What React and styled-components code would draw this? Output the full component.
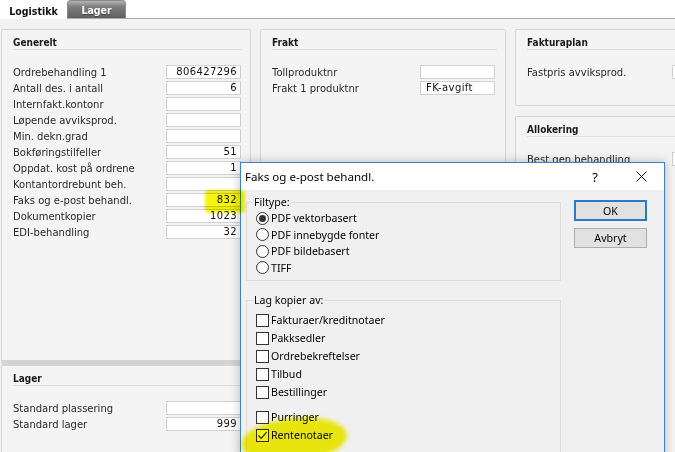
import React from "react";
import styled, { createGlobalStyle } from "styled-components";

const GlobalStyle = createGlobalStyle`
  html, body { margin: 0; padding: 0; }
  body {
    width: 675px; height: 452px; overflow: hidden; background: #fff;
    font-family: "DejaVu Sans", Verdana, sans-serif;
  }
  * { box-sizing: border-box; }
`;

const Page = styled.div`
  position: relative;
  width: 675px;
  height: 452px;
  overflow: hidden;
  display: flex;
  flex-direction: column;
`;

const TabBar = styled.div`
  display: flex;
  align-items: flex-end;
  height: 21px;
  border-bottom: 1px solid #ababab;
  background: #fff;
`;

const Tab = styled.div`
  display: flex;
  align-items: center;
  justify-content: center;
  font-family: "DejaVu Sans Condensed", "DejaVu Sans", sans-serif;
  font-weight: bold;
  font-size: 10.5px;
  height: ${(p) => (p.$active ? "17px" : "18px")};
  padding: 0 ${(p) => (p.$active ? "10px" : "0")};
  width: ${(p) => (p.$active ? "67px" : "59px")};
  margin-bottom: ${(p) => (p.$active ? "-1px" : "0")};
  background: ${(p) =>
    p.$active ? "#fff" : "linear-gradient(#b4b4b4, #7c7c7c 35%, #606060)"};
  color: ${(p) => (p.$active ? "#111" : "#fff")};
  text-shadow: ${(p) => (p.$active ? "none" : "0 1px 0 #444")};
  border-radius: 4px 4px 0 0;
  ${(p) => (p.$active ? "" : "border: 1px solid #8a8a8a; border-bottom: none;")}
`;

const Content = styled.div`
  flex: 1;
  background: #f2f2f2;
  padding: 10px 0 0 1px;
  display: grid;
  grid-template-columns: 250px 246px 230px;
  column-gap: 9px;
  align-items: start;
`;

const Column = styled.div`
  display: flex;
  flex-direction: column;
  gap: ${(p) => p.$gap || 0}px;
`;

const Panel = styled.div`
  background: #f4f4f4;
  border: 1px solid #d6d6d6;
  border-radius: 2px;
  height: ${(p) => (p.$h ? `${p.$h}px` : "auto")};
  ${(p) => (p.$strip ? "border-bottom: 5px solid #d4d4d4;" : "")}
  padding-bottom: 20px;
`;

const PanelHeader = styled.div`
  margin: 0 8px 0 11px;
  padding-top: 6px;
  height: 20px;
  line-height: 13px;
  border-bottom: 1px solid #e0e0e0;
  font-family: "DejaVu Sans Condensed", "DejaVu Sans", sans-serif;
  font-weight: bold;
  font-size: 10px;
  color: #1a1a1a;
`;

const Rows = styled.div`
  padding: 14px ${(p) => p.$pr || 9}px 0 11px;
  display: flex;
  flex-direction: column;
`;

const Row = styled.div`
  display: grid;
  grid-template-columns: ${(p) => (p.$labelW ? `${p.$labelW}px 75px` : "1fr 75px")};
  align-items: center;
  height: 16px;
  font-size: 10px;
  color: #2a2a2a;
  white-space: nowrap;
`;

const Field = styled.div`
  height: 14px;
  background: #fff;
  border: 1px solid #cfcfcf;
  font-size: 10px;
  line-height: 12px;
  color: #111;
  text-align: ${(p) => (p.$left ? "left" : "right")};
  padding: 0 3px 0 5px;
  letter-spacing: 0.4px;
`;

const Dialog = styled.div`
  position: absolute;
  left: 240px;
  top: 162px;
  width: 425px;
  height: 320px;
  border: 1px solid #3783c6;
  background: #f0f0f0;
  box-shadow: 0 0 10px rgba(0, 0, 0, 0.25);
  font-family: "Noto Sans", "Open Sans", sans-serif;
  font-size: 10.6px;
  color: #000;
  display: flex;
  flex-direction: column;
`;

const TitleBar = styled.div`
  height: 27px;
  background: #fff;
  display: flex;
  align-items: center;
  padding-left: 4px;
  font-size: 11.6px;
`;

const Title = styled.div`
  flex: 1;
`;

const CaptionButton = styled.div`
  width: 46px;
  height: 27px;
  display: flex;
  align-items: center;
  justify-content: center;
  font-size: 13px;
`;

const DialogBody = styled.div`
  flex: 1;
  display: flex;
  gap: 13px;
  padding: 5px 17px 0 5px;
`;

const Groups = styled.div`
  width: 315px;
  display: flex;
  flex-direction: column;
  gap: 12px;
`;

const GroupBox = styled.fieldset`
  margin: 0;
  border: 1px solid #dcdcdc;
  padding: 0 0 ${(p) => p.$pb || 4}px 9px;
  min-width: 0;
`;

const Legend = styled.legend`
  margin-left: -3px;
  padding: 0 1px;
  line-height: 15px;
  font-size: 10.6px;
  color: #000;
`;

const OptionList = styled.div`
  display: flex;
  flex-direction: column;
  padding-top: ${(p) => p.$pt || 0}px;
`;

const Option = styled.div`
  display: flex;
  align-items: center;
  gap: 2px;
  height: ${(p) => p.$h}px;
  margin-top: ${(p) => p.$mt || 0}px;
  white-space: nowrap;
`;

const RadioCircle = styled.span`
  width: 13px;
  height: 13px;
  border-radius: 50%;
  border: 1px solid #333;
  background: #fff;
  display: flex;
  align-items: center;
  justify-content: center;
  flex: none;
  &::after {
    content: "";
    width: 7px;
    height: 7px;
    border-radius: 50%;
    background: ${(p) => (p.$on ? "#333" : "transparent")};
  }
`;

const CheckSquare = styled.span`
  width: 13px;
  height: 13px;
  border: 1px solid #333;
  background: #fff;
  display: flex;
  align-items: center;
  justify-content: center;
  flex: none;
`;

const Buttons = styled.div`
  display: flex;
  flex-direction: column;
  gap: 7px;
  margin-top: 5px;
`;

const Button = styled.div`
  width: 73px;
  height: ${(p) => (p.$default ? "21px" : "20px")};
  background: #e1e1e1;
  border: ${(p) => (p.$default ? "2px solid #2a7ac9" : "1px solid #adadad")};
  display: flex;
  align-items: center;
  justify-content: center;
  font-size: 10.6px;
`;

const Highlight = styled.div`
  position: absolute;
  left: ${(p) => p.$x}px;
  top: ${(p) => p.$y}px;
  width: ${(p) => p.$w}px;
  height: ${(p) => p.$hh}px;
  background: rgba(246, 243, 0, 0.95);
  mix-blend-mode: multiply;
  filter: blur(${(p) => p.$blur}px);
  border-radius: ${(p) => p.$r};
  transform: rotate(${(p) => p.$rot || 0}deg);
  pointer-events: none;
`;

const generelt = [
  ["Ordrebehandling 1", "806427296"],
  ["Antall des. i antall", "6"],
  ["Internfakt.kontonr", ""],
  ["Løpende avviksprod.", ""],
  ["Min. dekn.grad", ""],
  ["Bokføringstilfeller", "51"],
  ["Oppdat. kost på ordrene", "1"],
  ["Kontantordrebunt beh.", ""],
  ["Faks og e-post behandl.", "832"],
  ["Dokumentkopier", "1023"],
  ["EDI-behandling", "32"],
];

const filtypes = [
  ["PDF vektorbasert", true],
  ["PDF innebygde fonter", false],
  ["PDF bildebasert", false],
  ["TIFF", false],
];

const kopier = [
  ["Fakturaer/kreditnotaer", false, 0],
  ["Pakksedler", false, 0],
  ["Ordrebekreftelser", false, 0],
  ["Tilbud", false, 0],
  ["Bestillinger", false, 0],
  ["Purringer", false, 7],
  ["Rentenotaer", true, 0],
];

function Check() {
  return (
    <svg width="11" height="11" viewBox="0 0 11 11">
      <path d="M1.5 5.5 L4.2 8.3 L9.6 2.2" fill="none" stroke="#222" strokeWidth="1.2" />
    </svg>
  );
}

function CloseIcon() {
  return (
    <svg width="11" height="11" viewBox="0 0 11 11">
      <path d="M0.5 0.5 L10.5 10.5 M10.5 0.5 L0.5 10.5" stroke="#111" strokeWidth="1" />
    </svg>
  );
}

export default function App() {
  return (
    <Page>
      <GlobalStyle />
      <TabBar>
        <Tab $active>Logistikk</Tab>
        <Tab>Lager</Tab>
      </TabBar>
      <Content>
        <Column>
          <Panel $h={336} $strip>
            <PanelHeader>Generelt</PanelHeader>
            <Rows>
              {generelt.map(([l, v]) => (
                <Row key={l}>
                  <span>{l}</span>
                  <Field>{v}</Field>
                </Row>
              ))}
            </Rows>
          </Panel>
          <Panel $h={120}>
            <PanelHeader>Lager</PanelHeader>
            <Rows>
              <Row>
                <span>Standard plassering</span>
                <Field />
              </Row>
              <Row>
                <span>Standard lager</span>
                <Field>999</Field>
              </Row>
            </Rows>
          </Panel>
        </Column>
        <Column>
          <Panel $h={440}>
            <PanelHeader>Frakt</PanelHeader>
            <Rows $pr={10}>
              <Row>
                <span>Tollproduktnr</span>
                <Field />
              </Row>
              <Row>
                <span>Frakt 1 produktnr</span>
                <Field $left>FK-avgift</Field>
              </Row>
            </Rows>
          </Panel>
        </Column>
        <Column $gap={10}>
          <Panel $h={77}>
            <PanelHeader>Fakturaplan</PanelHeader>
            <Rows>
              <Row $labelW={145}>
                <span>Fastpris avviksprod.</span>
                <Field />
              </Row>
            </Rows>
          </Panel>
          <Panel $h={340}>
            <PanelHeader>Allokering</PanelHeader>
            <Rows>
              <Row $labelW={145}>
                <span>Best.gen.behandling</span>
                <Field />
              </Row>
            </Rows>
          </Panel>
        </Column>
      </Content>

      <Dialog>
        <TitleBar>
          <Title>Faks og e-post behandl.</Title>
          <CaptionButton>?</CaptionButton>
          <CaptionButton>
            <CloseIcon />
          </CaptionButton>
        </TitleBar>
        <DialogBody>
          <Groups>
            <GroupBox $pb={4}>
              <Legend>Filtype:</Legend>
              <OptionList>
                {filtypes.map(([l, on]) => (
                  <Option key={l} $h={16.5}>
                    <RadioCircle $on={on} />
                    <span>{l}</span>
                  </Option>
                ))}
              </OptionList>
            </GroupBox>
            <GroupBox $pb={10}>
              <Legend>Lag kopier av:</Legend>
              <OptionList $pt={3}>
                {kopier.map(([l, on, mt]) => (
                  <Option key={l} $h={18} $mt={mt}>
                    <CheckSquare>{on && <Check />}</CheckSquare>
                    <span>{l}</span>
                  </Option>
                ))}
              </OptionList>
            </GroupBox>
          </Groups>
          <Buttons>
            <Button $default>OK</Button>
            <Button>Avbryt</Button>
          </Buttons>
        </DialogBody>
      </Dialog>

      <Highlight $x={205} $y={190} $w={40} $hh={23} $blur={1.5} $r="4px" />
      <Highlight $x={241} $y={418} $w={106} $hh={44} $blur={2} $r="50%" $rot={-6} />
    </Page>
  );
}
